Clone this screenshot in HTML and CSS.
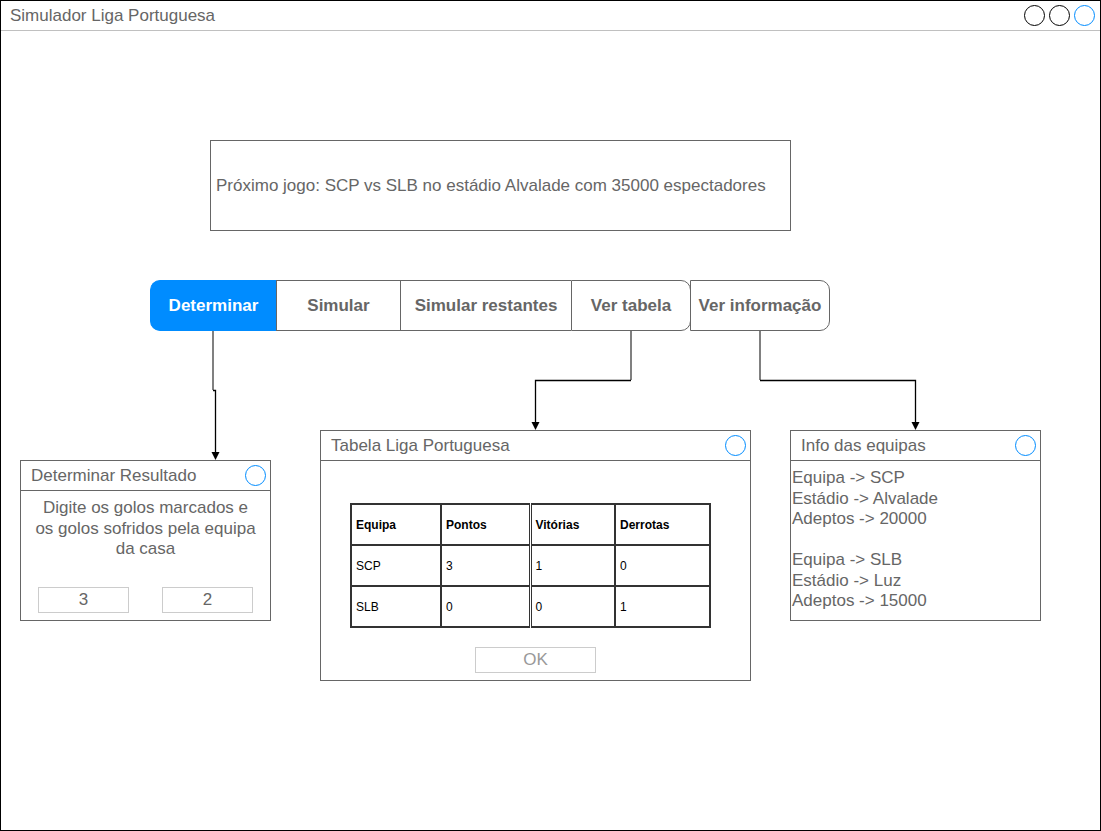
FILE: index.html
```html
<!DOCTYPE html>
<html lang="pt">
<head>
<meta charset="utf-8">
<title>Simulador Liga Portuguesa</title>
<link rel="stylesheet" href="styles.css">
</head>
<body>
<div class="frame">
  <div class="titlebar">
    <span class="app-title">Simulador Liga Portuguesa</span>
    <div class="win-btns">
      <span class="dot"></span><span class="dot"></span><span class="dot dot-blue"></span>
    </div>
  </div>

  <svg class="wires" width="1101" height="831" viewBox="0 0 1101 831">
    <g stroke="#808080" stroke-width="2" fill="none">
      <line x1="213" y1="330" x2="213" y2="390"/>
      <line x1="631" y1="330" x2="631" y2="380"/>
      <line x1="760" y1="330" x2="760" y2="380"/>
    </g>
    <g stroke="#000" stroke-width="1.3" fill="none">
      <polyline points="213,390.5 215.5,390.5 215.5,454"/>
      <polyline points="631,380.5 535.5,380.5 535.5,424"/>
      <polyline points="760,380.5 915.5,380.5 915.5,424"/>
    </g>
    <g fill="#000">
      <polygon points="211.5,452 219.5,452 215.5,460"/>
      <polygon points="531.5,422 539.5,422 535.5,430"/>
      <polygon points="911.5,422 919.5,422 915.5,430"/>
    </g>
  </svg>

  <div class="node next-game">Próximo jogo: SCP vs SLB no estádio Alvalade com 35000 espectadores</div>

  <nav class="node tabs">
    <span class="tab tab-active">Determinar</span>
    <span class="tab">Simular</span>
    <span class="tab">Simular restantes</span>
    <span class="tab tab-round">Ver tabela</span>
    <span class="tab tab-round tab-last">Ver informação</span>
  </nav>

  <section class="node win win-result">
    <header class="win-head"><span>Determinar Resultado</span><span class="dot dot-blue"></span></header>
    <div class="win-body result-body">
      <p class="prompt">Digite os golos marcados e os golos sofridos pela equipa da casa</p>
      <div class="inputs">
        <span class="field">3</span>
        <span class="field">2</span>
      </div>
    </div>
  </section>

  <section class="node win win-table">
    <header class="win-head"><span>Tabela Liga Portuguesa</span><span class="dot dot-blue"></span></header>
    <div class="win-body table-body">
      <table class="league">
        <colgroup><col class="c1"><col class="c2"><col class="c3"><col class="c4"></colgroup>
        <tr><th>Equipa</th><th>Pontos</th><th class="split">Vitórias</th><th>Derrotas</th></tr>
        <tr><td>SCP</td><td>3</td><td class="split">1</td><td>0</td></tr>
        <tr><td>SLB</td><td>0</td><td class="split">0</td><td>1</td></tr>
      </table>
      <span class="ok">OK</span>
    </div>
  </section>

  <section class="node win win-info">
    <header class="win-head"><span>Info das equipas</span><span class="dot dot-blue"></span></header>
    <div class="win-body info-body">
      <p>Equipa -&gt; SCP<br>Estádio -&gt; Alvalade<br>Adeptos -&gt; 20000</p>
      <p>Equipa -&gt; SLB<br>Estádio -&gt; Luz<br>Adeptos -&gt; 15000</p>
    </div>
  </section>
</div>
</body>
</html>
```

FILE: styles.css
```css
* { box-sizing: border-box; }
html, body { margin: 0; padding: 0; background: #fff; }
body { font-family: "Liberation Sans", Arial, Helvetica, sans-serif; color: #666; }

.frame {
  position: relative;
  width: 1101px;
  height: 831px;
  border: 1px solid #000;
  overflow: hidden;
}

.titlebar {
  height: 30px;
  border-bottom: 1px solid #c0c0c0;
  display: flex;
  align-items: center;
  justify-content: space-between;
  padding: 0 5px 0 9px;
}
.app-title { font-size: 17px; color: #666; }

.win-btns { display: flex; gap: 4px; }
.dot {
  width: 21px;
  height: 21px;
  border: 1.5px solid #000;
  border-radius: 50%;
  display: inline-block;
}
.dot-blue { border-color: #008cff; }

.wires { position: absolute; left: -1px; top: -1px; pointer-events: none; }

.node { position: absolute; }

.next-game {
  left: 209px; top: 139px;
  width: 581px; height: 91px;
  border: 1px solid #666;
  display: flex;
  align-items: center;
  padding: 0 0 0 5px;
  font-size: 17px;
}

.tabs {
  left: 149px; top: 279px;
  width: 681px; height: 51px;
  display: flex;
}
.tab {
  height: 100%;
  display: flex;
  align-items: center;
  justify-content: center;
  font-weight: bold;
  font-size: 17px;
  color: #666;
  border: 1px solid #666;
  border-right: none;
  background: #fff;
}
.tab:nth-child(1) { width: 126px; }
.tab:nth-child(2) { width: 124px; }
.tab:nth-child(3) { width: 171px; }
.tab:nth-child(4) { width: 120px; }
.tab:nth-child(5) { width: 140px; }
.tab-active {
  background: #008cff;
  border-color: #008cff;
  color: #fff;
  border-radius: 10px 0 0 10px;
}
.tab-round {
  border-right: 1px solid #666;
  border-radius: 0 10px 10px 0;
}
.tab-round + .tab-round { margin-left: -1px; }

.win {
  border: 1px solid #666;
  background: #fff;
  display: flex;
  flex-direction: column;
}
.win-head {
  height: 30px;
  flex: none;
  border-bottom: 1px solid #666;
  display: flex;
  align-items: center;
  justify-content: space-between;
  padding: 0 4px 0 10px;
  font-size: 17px;
  color: #666;
}
.win-head .dot { width: 21px; height: 21px; }
.win-body { flex: 1; }

.win-result { left: 19px; top: 459px; width: 251px; height: 161px; }
.result-body { display: flex; flex-direction: column; align-items: center; }
.prompt {
  margin: 7px 0 0;
  width: 224px;
  text-align: center;
  font-size: 17px;
  line-height: 20.5px;
}
.inputs {
  margin-top: 27px;
  width: 215px;
  display: flex;
  justify-content: space-between;
}
.field {
  width: 91px; height: 26px;
  border: 1px solid #ccc;
  display: flex;
  align-items: center;
  justify-content: center;
  font-size: 17px;
}

.win-table { left: 319px; top: 429px; width: 431px; height: 251px; }
.table-body { display: flex; flex-direction: column; align-items: center; padding-top: 42px; }
.league {
  align-self: flex-start;
  margin-left: 29px;
  border-collapse: collapse;
  table-layout: fixed;
  border: 2px solid #333;
  font-size: 12px;
  color: #000;
  width: 359px;
}
.league col.c1 { width: 90px; }
.league col.c2 { width: 89px; }
.league col.c3 { width: 85px; }
.league col.c4 { width: 95px; }
.league th, .league td {
  border: 2px solid #333;
  height: 41px;
  padding: 0 4px;
  text-align: left;
  vertical-align: middle;
}
.league th { font-weight: bold; }
.league .split { border-left: 3px double #333; }
.ok {
  margin-top: 19px;
  width: 121px; height: 26px;
  border: 1px solid #ccc;
  display: flex;
  align-items: center;
  justify-content: center;
  font-size: 17px;
  color: #999;
}

.win-info { left: 789px; top: 429px; width: 251px; height: 191px; }
.info-body { padding: 7px 0 0 1px; font-size: 17px; line-height: 20.5px; }
.info-body p { margin: 0 0 20.5px; }
```
